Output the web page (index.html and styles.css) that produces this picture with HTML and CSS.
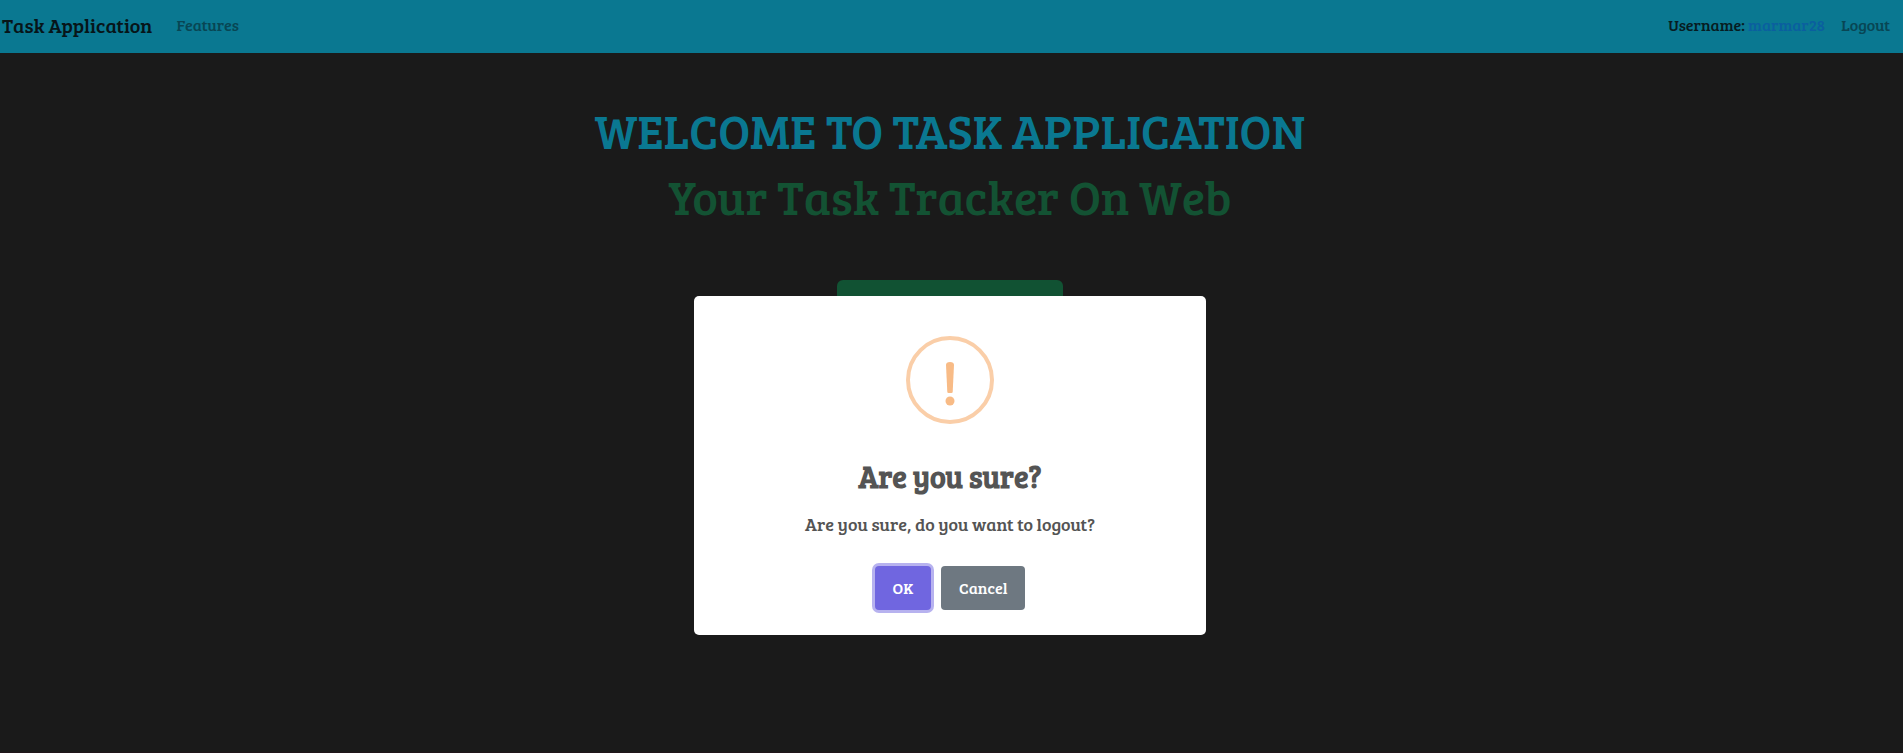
FILE: index.html
```html
<!DOCTYPE html>
<html lang="en">
<head>
<meta charset="utf-8">
<meta name="viewport" content="width=device-width, initial-scale=1">
<title>Task Application</title>
<link rel="stylesheet" href="styles.css">
</head>
<body>
<nav class="navbar">
  <a class="brand" href="#">Task Application</a>
  <a class="nav-link" href="#">Features</a>
  <div class="account">
    <span class="user">Username: <a class="user-name" href="#">marmar28</a></span>
    <a class="nav-link" href="#">Logout</a>
  </div>
</nav>
<main class="hero">
  <h1 class="hero-title">WELCOME TO TASK APPLICATION</h1>
  <h2 class="hero-subtitle">Your Task Tracker On Web</h2>
  <button class="hero-button" type="button" aria-label="Open tasks"></button>
</main>
<div class="overlay">
  <div class="modal" role="dialog" aria-modal="true" aria-labelledby="modal-title" aria-describedby="modal-text">
    <svg class="modal-icon" viewBox="0 0 88 88" aria-hidden="true">
      <circle cx="44" cy="44" r="42" fill="none" stroke="#facea8" stroke-width="4"/>
      <path d="M40 29Q40 26 44 26Q48 26 48 29L46.700 56Q46.600 57 45.500 57H42.500Q41.400 57 41.300 56Z" fill="#f8bb86"/>
      <circle cx="44" cy="65" r="4.500" fill="#f8bb86"/>
    </svg>
    <h2 class="modal-title" id="modal-title">Are you sure?</h2>
    <p class="modal-text" id="modal-text">Are you sure, do you want to logout?</p>
    <div class="modal-actions">
      <button class="button button-confirm" type="button">OK</button>
      <button class="button button-cancel" type="button">Cancel</button>
    </div>
  </div>
</div>
</body>
</html>
```
FILE: styles.css
```css
* { box-sizing: border-box; }

body {
  display: flex;
  flex-direction: column;
  min-height: 100vh;
  margin: 0;
  border-bottom: 1px solid #20151a;
  background: #1a1a1a;
  font-family: "Bree Serif", "DejaVu Serif Condensed", "DejaVu Serif", serif;
  font-size: 16px;
  line-height: 24px;
}

a { text-decoration: none; }

h1, h2, p { margin: 0; }

.navbar {
  display: flex;
  align-items: center;
  min-height: 53px;
  padding: 0 13px 4px 2px;
  background: #0a7891;
}

.brand {
  margin-right: 24px;
  color: #071519;
  font-size: 20px;
}

.nav-link { color: #084654; }

.account {
  display: flex;
  gap: 16px;
  margin-left: auto;
}

.user { color: #071c22; }

.user-name { color: #0b5f9f; }

.hero {
  display: flex;
  flex-direction: column;
  align-items: center;
  gap: 8px;
  padding: 48px 3px 0 0;
  text-align: center;
}

.hero-title,
.hero-subtitle {
  font-size: 48px;
  font-weight: 500;
  line-height: 58px;
}

.hero-title { color: #0a7891; }

.hero-subtitle { color: #135233; }

.hero-button {
  width: 226px;
  height: 56px;
  margin-top: 47px;
  border: 0;
  border-radius: 6px;
  background: #115233;
}

.overlay {
  position: fixed;
  inset: 0;
  display: flex;
  justify-content: center;
  align-items: flex-start;
  padding: 296px 13px 10px 10px;
  overflow: hidden;
}

.modal {
  display: flex;
  flex-direction: column;
  align-items: center;
  width: 100%;
  max-width: 512px;
  padding: 40px 0 25px;
  border-radius: 5px;
  background: #fff;
  color: #545454;
  text-align: center;
}

.modal-icon {
  width: 88px;
  height: 88px;
}

.modal-title {
  margin-top: 32px;
  font-size: 30px;
  font-weight: 700;
  line-height: 40px;
}

.modal-text {
  margin-top: 16px;
  font-size: 18px;
}

.modal-actions {
  display: flex;
  gap: 10px;
  margin-top: 30px;
}

.button {
  height: 44px;
  padding: 0 18px 1px;
  border: 0;
  border-radius: 4px;
  color: #fff;
  font-family: inherit;
  font-size: 16px;
  font-weight: 500;
}

.button-confirm {
  background: #7066e0;
  box-shadow: 0 0 0 3px #b7b2ef;
}

.button-cancel { background: #6e7881; }
```
